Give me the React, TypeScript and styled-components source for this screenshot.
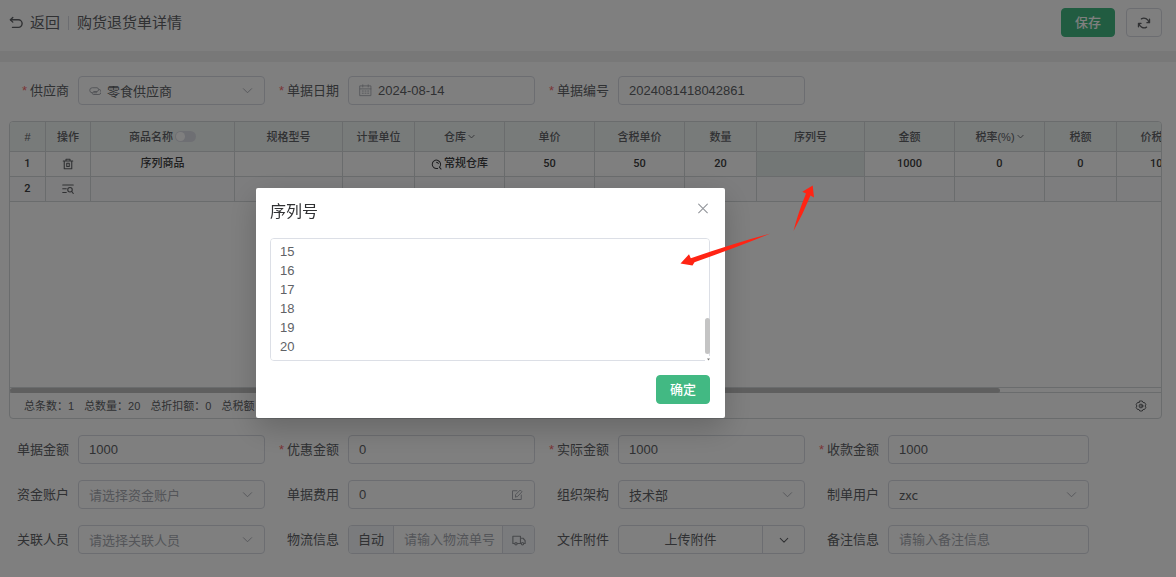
import React, { useEffect, useRef, useState } from "react";
import styled, { createGlobalStyle, css } from "styled-components";

const sans = `"Liberation Sans", "Noto Sans CJK SC", sans-serif`;
const cjk = `"Noto Sans CJK SC", sans-serif`;
const cellFont = `Roboto, "Noto Sans CJK SC", sans-serif`;

const color = {
  text: "#606266",
  strong: "#3c3d40",
  muted: "#a8abb2",
  border: "#d8dbe2",
  line: "#d4d8da",
  green: "#42b983",
  danger: "#f56c6c",
};

const GlobalStyle = createGlobalStyle`
  * { box-sizing: border-box; }
  body {
    margin: 0;
    background: #fff;
    color: ${color.text};
    font: 13px/20px ${sans};
  }
  button, input, select, textarea { font: inherit; color: inherit; margin: 0; }
  button { cursor: pointer; }
`;

/* ---------- icons ---------- */

const Svg = styled.svg<{ $size: number }>`
  width: ${(p) => p.$size}px;
  height: ${(p) => p.$size}px;
  flex: none;
  display: block;
  fill: none;
  stroke: currentColor;
  stroke-linecap: round;
  stroke-linejoin: round;
`;

type IconProps = { size: number; w?: number; children: React.ReactNode };
const Icon = ({ size, w = 2, children }: IconProps) => (
  <Svg $size={size} viewBox="0 0 24 24" strokeWidth={w} aria-hidden="true">
    {children}
  </Svg>
);

const BackIcon = () => (
  <Icon size={14} w={2.4}>
    <path d="M6.500 2.500 2.500 6.500l4 4" />
    <path d="M2.500 6.500H16a6.500 6.500 0 0 1 0 13H6" />
  </Icon>
);
const RefreshIcon = () => (
  <Icon size={14} w={2.2}>
    <path d="M7.500 5A8.500 8.500 0 0 1 20.300 11M21.500 5.500v6h-4.500" />
    <path d="M16.500 19A8.500 8.500 0 0 1 3.700 13M2.500 18.500v-6H7" />
  </Icon>
);
const ChevronIcon = ({ size = 11, w = 2 }: { size?: number; w?: number }) => (
  <Icon size={size} w={w}>
    <path d="m3 8 9 9 9-9" />
  </Icon>
);
const LinkIcon = () => (
  <Icon size={12} w={2}>
    <path d="M15.500 15.500H6.500a5 5 0 0 1 0-10h9.500a3.800 3.800 0 0 1 0 7.500H9.500" />
    <path d="M20 8.500a5 5 0 0 1-2 10.500H8.500a3.500 3.500 0 0 1-2.500-3.500" />
  </Icon>
);
const CalendarIcon = () => (
  <Icon size={13} w={1.6}>
    <rect x="2" y="3.500" width="20" height="18" />
    <path d="M2 9h20M7 1.500v4M17 1.500v4M6 13h2M11 13h2M16 13h2M6 17h2M11 17h2M16 17h2" />
  </Icon>
);
const TrashIcon = () => (
  <Icon size={12} w={2.2}>
    <path d="M2.500 6h19M8 6V2.500h8V6M4.500 6v15.500h15V6M9.500 10.500v6.500M14.500 10.500v6.500M9.500 17h5M9.500 10.500h5" />
  </Icon>
);
const ListSearchIcon = () => (
  <Icon size={12} w={2.2}>
    <path d="M1.500 4h21M1.500 11.500h7M1.500 19h7" />
    <circle cx="16" cy="13.500" r="4.500" />
    <path d="m19.500 17 3 4" />
  </Icon>
);
const SearchIcon = () => (
  <Icon size={11} w={2.2}>
    <path d="M14.500 20.500A9.200 9.200 0 1 1 19 17.500" />
    <path d="M12 7a4.500 4.500 0 0 1 4 3M18 17.500l4 4.500" />
  </Icon>
);
const EditIcon = () => (
  <Icon size={12} w={2}>
    <path d="M12 3.500H3v17.500h17.500V12" />
    <path d="M9 15.500v-4L18.500 2l3.500 3.500-9.500 10H9Z" />
  </Icon>
);
const TruckIcon = () => (
  <Icon size={14} w={2}>
    <path d="M4.500 18H1.500V5.500h13V18H9M14.500 9h4.500l3.500 4v5h-2.500M16 18h-1.500" />
    <circle cx="6.800" cy="18.300" r="2" />
    <circle cx="18" cy="18.300" r="2" />
  </Icon>
);
const GearIcon = () => (
  <Icon size={12} w={2}>
    <path d="M9.500 2h5l1.500 3 3.300.2 2.500 4.300L20 12l1.800 2.500-2.500 4.300L16 19l-1.500 3h-5L8 19l-3.300-.2-2.500-4.300L4 12 2.200 9.500l2.500-4.300L8 5Z" />
    <circle cx="12" cy="12" r="3.800" />
    <circle cx="12" cy="12" r=".5" />
  </Icon>
);
const CloseIcon = () => (
  <Icon size={14} w={1.8}>
    <path d="m4.500 3.500 15 15M19.500 3.500l-15 15" />
  </Icon>
);

/* ---------- page frame ---------- */

const Header = styled.header`
  display: flex;
  align-items: flex-start;
  justify-content: space-between;
  padding: 8px 14px 14px 9px;
  border-bottom: 11px solid #f1f1f1;
`;

const HeaderSide = styled.div`
  display: flex;
  align-items: center;
  gap: 11px;
  height: 29px;
`;

const Crumbs = styled(HeaderSide)`
  gap: 8px;
  font-size: 15px;
`;

const BackButton = styled.button`
  display: flex;
  align-items: center;
  gap: 7px;
  padding: 0;
  border: 0;
  background: none;
`;

const Divider = styled.span`
  width: 1px;
  height: 14px;
  background: ${color.border};
`;

const Title = styled.h1`
  margin: 0;
  font-size: inherit;
  font-weight: 400;
`;

const Button = styled.button<{ $primary?: boolean }>`
  display: inline-flex;
  align-items: center;
  justify-content: center;
  height: 29px;
  padding: 0 ${(p) => (p.$primary ? 13 : 10)}px;
  border: 1px solid ${(p) => (p.$primary ? color.green : color.border)};
  border-radius: 4px;
  background: ${(p) => (p.$primary ? color.green : "#fff")};
  color: ${(p) => (p.$primary ? "#fff" : color.text)};
  font-weight: ${(p) => (p.$primary ? 500 : 400)};
`;

const Main = styled.main`
  display: flex;
  flex-direction: column;
  gap: 16px;
  padding: 14px 14px 23px 9px;
`;

/* ---------- form ---------- */

const Form = styled.div`
  display: grid;
  grid-template-columns: 256fr 256fr 256fr 270fr 59fr;
  gap: 16px 14px;
`;

const Item = styled.div<{ $newRow?: boolean }>`
  display: flex;
  align-items: center;
  gap: 9px;
  min-width: 0;
  ${(p) => p.$newRow && css`grid-column: 1;`}
`;

const Label = styled.label<{ $required?: boolean }>`
  display: flex;
  justify-content: flex-end;
  flex: 0 0 60px;
  white-space: nowrap;
  ${(p) =>
    p.$required &&
    css`
      &::before {
        content: "*";
        margin-right: 3px;
        color: ${color.danger};
      }
    `}
`;

const Box = styled.div`
  display: flex;
  align-items: center;
  flex: 1;
  min-width: 0;
  height: 29px;
  border: 1px solid ${color.border};
  border-radius: 4px;
  background: #fff;
  overflow: hidden;
`;

const Adorn = styled.span<{ $end?: boolean }>`
  display: flex;
  color: ${color.muted};
  pointer-events: none;
  ${(p) => (p.$end ? "margin: 0 11px 0 0;" : "margin: 0 -4px 0 10px;")}
`;

const control = css`
  flex: 1;
  min-width: 0;
  width: 0;
  height: 100%;
  padding: 0 4px 0 10px;
  border: 0;
  outline: 0;
  background: none;
`;

const Input = styled.input`
  ${control}
  &::placeholder { color: ${color.muted}; opacity: 1; }
`;

const Select = styled.select<{ $empty?: boolean }>`
  ${control}
  appearance: none;
  font-family: ${cjk};
  color: ${(p) => (p.$empty ? color.muted : color.text)};
`;

const Segment = styled.button<{ $side: "left" | "right" }>`
  display: flex;
  align-items: center;
  justify-content: center;
  height: 100%;
  padding: 0 9px;
  border: 0 solid ${color.border};
  ${(p) => (p.$side === "left" ? "border-right-width: 1px;" : "border-left-width: 1px;")}
  background: #f5f7fa;
`;

const LogisticsButton = styled(Segment)`
  width: 32px;
  padding: 0;
  color: #909399;
`;

const Upload = styled.button`
  flex: 1;
  height: 100%;
  border: 0;
  background: none;
`;

const UploadMore = styled(Segment)`
  width: 42px;
  background: none;
`;

type FieldProps = {
  id: string;
  label: string;
  required?: boolean;
  newRow?: boolean;
  children: React.ReactNode;
};
const Field = ({ id, label, required, newRow, children }: FieldProps) => (
  <Item $newRow={newRow}>
    <Label htmlFor={id} $required={required}>{label}</Label>
    <Box>{children}</Box>
  </Item>
);

type SelectFieldProps = Omit<FieldProps, "children"> & {
  value: string;
  empty?: boolean;
  icon?: React.ReactNode;
};
const SelectField = ({ value, empty, icon, ...field }: SelectFieldProps) => (
  <Field {...field}>
    {icon && <Adorn>{icon}</Adorn>}
    <Select id={field.id} $empty={empty}>
      <option>{value}</option>
    </Select>
    <Adorn $end><ChevronIcon /></Adorn>
  </Field>
);

/* ---------- goods grid ---------- */

const Grid = styled.section`
  border: 1px solid ${color.line};
  border-radius: 4px;
  overflow: hidden;
  font-size: 11px;
  line-height: 16px;
`;

const GridView = styled.div`
  height: 265px;
  overflow: hidden;
`;

const Table = styled.table`
  width: 1199px;
  table-layout: fixed;
  border-collapse: separate;
  border-spacing: 0;
  text-align: center;
`;

const Th = styled.th<{ $width: number }>`
  width: ${(p) => p.$width}px;
  height: 30px;
  padding: 0;
  border: solid ${color.line};
  border-width: 0 1px 1px 0;
  background: #f1f6f5;
  font-weight: 500;
`;

const Td = styled.td<{ $active?: boolean; $tint?: boolean }>`
  height: 25px;
  padding: 0;
  border: solid ${color.line};
  border-width: 0 1px 1px 0;
  background: ${(p) => (p.$active ? "#e7eeec" : p.$tint ? "#fafafc" : "#fff")};
  color: ${color.strong};
  font-family: ${cellFont};
  font-weight: 500;
`;

const Inline = styled.span`
  display: flex;
  align-items: center;
  justify-content: center;
  gap: 2px;
`;

const IconButton = styled.button`
  display: inline-flex;
  padding: 0;
  border: 0;
  background: none;
  color: ${color.text};
  vertical-align: middle;
`;

const Switch = styled.input`
  appearance: none;
  display: flex;
  width: 21px;
  height: 11px;
  padding: 1px;
  border-radius: 6px;
  background: #dcdfe6;
  &::before {
    content: "";
    width: 9px;
    height: 9px;
    border-radius: 50%;
    background: #fff;
  }
  &:checked { justify-content: flex-end; background: ${color.green}; }
`;

const ScrollTrack = styled.div`
  height: 6px;
  border: solid ${color.line};
  border-width: 1px 0;
`;

const ScrollThumb = styled.div`
  width: 86%;
  height: 5px;
  border-radius: 3px;
  background: #bfbfbf;
`;

const Summary = styled.footer`
  display: flex;
  align-items: center;
  gap: 10px;
  height: 25px;
  padding: 0 14px;
  & > :last-child { margin-left: auto; }
`;

const columns: { title: string; width: number; extra?: "switch" | "menu" }[] = [
  { title: "#", width: 36 },
  { title: "操作", width: 45 },
  { title: "商品名称", width: 144, extra: "switch" },
  { title: "规格型号", width: 108 },
  { title: "计量单位", width: 72 },
  { title: "仓库", width: 90, extra: "menu" },
  { title: "单价", width: 90 },
  { title: "含税单价", width: 90 },
  { title: "数量", width: 72 },
  { title: "序列号", width: 108 },
  { title: "金额", width: 90 },
  { title: "税率(%)", width: 90, extra: "menu" },
  { title: "税额", width: 72 },
  { title: "价税合计", width: 92 },
];

const goods = ["序列商品", "", "", "常规仓库", "50", "50", "20", "", "1000", "0", "0", "1000"];

const GoodsGrid = () => (
  <Grid>
    <GridView>
      <Table>
        <thead>
          <tr>
            {columns.map((c) => (
              <Th key={c.title} $width={c.width}>
                <Inline>
                  {c.title}
                  {c.extra === "switch" && <Switch type="checkbox" role="switch" aria-label={c.title} />}
                  {c.extra === "menu" && <ChevronIcon size={7} w={3} />}
                </Inline>
              </Th>
            ))}
          </tr>
        </thead>
        <tbody>
          <tr>
            <Td>1</Td>
            <Td><IconButton aria-label="删除"><TrashIcon /></IconButton></Td>
            {goods.map((v, i) => (
              <Td key={i} $active={i === 7}>
                {i === 3 ? <Inline><SearchIcon />{v}</Inline> : v}
              </Td>
            ))}
          </tr>
          <tr>
            <Td $tint>2</Td>
            <Td $tint><IconButton aria-label="选择商品"><ListSearchIcon /></IconButton></Td>
            {goods.map((_, i) => <Td key={i} $tint />)}
          </tr>
        </tbody>
      </Table>
    </GridView>
    <ScrollTrack><ScrollThumb /></ScrollTrack>
    <Summary>
      <span>总条数：1</span>
      <span>总数量：20</span>
      <span>总折扣额：0</span>
      <span>总税额：0</span>
      <IconButton aria-label="设置"><GearIcon /></IconButton>
    </Summary>
  </Grid>
);

/* ---------- serial number dialog ---------- */

const Overlay = styled.div`
  position: fixed;
  inset: 0;
  background: rgba(0, 0, 0, 0.5);
`;

const Dialog = styled.div`
  position: absolute;
  top: 188px;
  left: 256px;
  width: 469px;
  padding: 14px 15px 14px 14px;
  border-radius: 2px;
  background: #fff;
  box-shadow: 0 10px 30px rgba(0, 0, 0, 0.2);
`;

const DialogHead = styled.div`
  display: flex;
  align-items: flex-start;
  justify-content: space-between;
  height: 36px;
  color: #303133;
  font-size: 16px;
`;

const DialogTitle = styled.h2`
  margin: 0;
  font-size: inherit;
  font-weight: 400;
  line-height: 20px;
`;

const CloseButton = styled(IconButton)`
  color: #909399;
`;

const TextWrap = styled.div`
  position: relative;
  display: flex;
`;

const TextArea = styled.textarea`
  width: 100%;
  height: 123px;
  padding: 4px 9px;
  border: 1px solid #dcdfe6;
  border-radius: 4px;
  outline: 0;
  resize: none;
  line-height: 19px;
  scrollbar-width: none;
`;

const TextThumb = styled.div`
  position: absolute;
  right: 0;
  width: 5px;
  border-radius: 3px;
  background: #c4c4c4;
`;

const Grip = styled.svg`
  position: absolute;
  right: 0;
  bottom: 0;
  width: 5px;
  height: 5px;
  background: #fff;
`;

const DialogFoot = styled.div`
  display: flex;
  justify-content: flex-end;
  padding-top: 14px;
`;

const serials = Array.from({ length: 20 }, (_, i) => i + 1).join("\n");
const GRIP = 6;

const SerialDialog = () => {
  const area = useRef<HTMLTextAreaElement>(null);
  const [thumb, setThumb] = useState({ top: 0, height: 0 });

  const measure = () => {
    const el = area.current;
    if (!el) return;
    const track = el.clientHeight - GRIP;
    setThumb({
      top: 1 + Math.round((track * el.scrollTop) / el.scrollHeight),
      height: Math.round((track * el.clientHeight) / el.scrollHeight),
    });
  };

  useEffect(() => {
    if (area.current) area.current.scrollTop = area.current.scrollHeight;
    measure();
  }, []);

  return (
    <Dialog role="dialog" aria-modal="true" aria-labelledby="dialog-title">
      <DialogHead>
        <DialogTitle id="dialog-title">序列号</DialogTitle>
        <CloseButton aria-label="关闭"><CloseIcon /></CloseButton>
      </DialogHead>
      <TextWrap>
        <TextArea ref={area} aria-labelledby="dialog-title" defaultValue={serials} onScroll={measure} />
        <TextThumb style={thumb} />
        <Grip viewBox="0 0 5 5"><path d="M2 2.500h3L3.500 4.500Z" fill="#777" /></Grip>
      </TextWrap>
      <DialogFoot>
        <Button $primary>确定</Button>
      </DialogFoot>
    </Dialog>
  );
};

/* red pointers towards the text box and the serial column */
const Pointers = styled.svg`
  position: absolute;
  top: 180px;
  left: 675px;
  width: 145px;
  height: 90px;
  fill: #ff2414;
  pointer-events: none;
`;

export default function App() {
  return (
    <>
      <GlobalStyle />
      <Header>
        <Crumbs>
          <BackButton><BackIcon />返回</BackButton>
          <Divider />
          <Title>购货退货单详情</Title>
        </Crumbs>
        <HeaderSide>
          <Button $primary>保存</Button>
          <Button aria-label="刷新"><RefreshIcon /></Button>
        </HeaderSide>
      </Header>
      <Main>
        <Form>
          <SelectField id="supplier" label="供应商" required value="零食供应商" icon={<LinkIcon />} />
          <Field id="date" label="单据日期" required>
            <Adorn><CalendarIcon /></Adorn>
            <Input id="date" defaultValue="2024-08-14" />
          </Field>
          <Field id="number" label="单据编号" required>
            <Input id="number" defaultValue="2024081418042861" />
          </Field>
        </Form>
        <GoodsGrid />
        <Form>
          <Field id="total" label="单据金额"><Input id="total" defaultValue="1000" /></Field>
          <Field id="discount" label="优惠金额" required><Input id="discount" defaultValue="0" /></Field>
          <Field id="actual" label="实际金额" required><Input id="actual" defaultValue="1000" /></Field>
          <Field id="money" label="收款金额" required><Input id="money" defaultValue="1000" /></Field>
          <SelectField newRow id="account" label="资金账户" value="请选择资金账户" empty />
          <Field id="cost" label="单据费用">
            <Input id="cost" defaultValue="0" />
            <Adorn $end><EditIcon /></Adorn>
          </Field>
          <SelectField id="frame" label="组织架构" value="技术部" />
          <SelectField id="user" label="制单用户" value="zxc" />
          <SelectField newRow id="people" label="关联人员" value="请选择关联人员" empty />
          <Field id="logistics" label="物流信息">
            <Segment $side="left">自动</Segment>
            <Input id="logistics" placeholder="请输入物流单号" />
            <LogisticsButton $side="right" aria-label="物流查询"><TruckIcon /></LogisticsButton>
          </Field>
          <Field id="file" label="文件附件">
            <Upload id="file">上传附件</Upload>
            <UploadMore $side="right" aria-label="更多"><ChevronIcon size={10} w={2.5} /></UploadMore>
          </Field>
          <Field id="remark" label="备注信息"><Input id="remark" placeholder="请输入备注信息" /></Field>
        </Form>
      </Main>
      <Overlay>
        <SerialDialog />
        <Pointers viewBox="675 180 145 90" aria-hidden="true">
          <path d="M770.500 233.500Q735 248 694.500 262.200L692.500 265.500 680.500 263.500 689 254.300 690.800 258.200Q735 243 770.500 233.500Z" />
          <path d="M793.500 231Q798 213 806 193.500L802.300 191.700 812.700 185.500 814 197.500 810.500 195.500Q803 214 793.500 231Z" />
        </Pointers>
      </Overlay>
    </>
  );
}
